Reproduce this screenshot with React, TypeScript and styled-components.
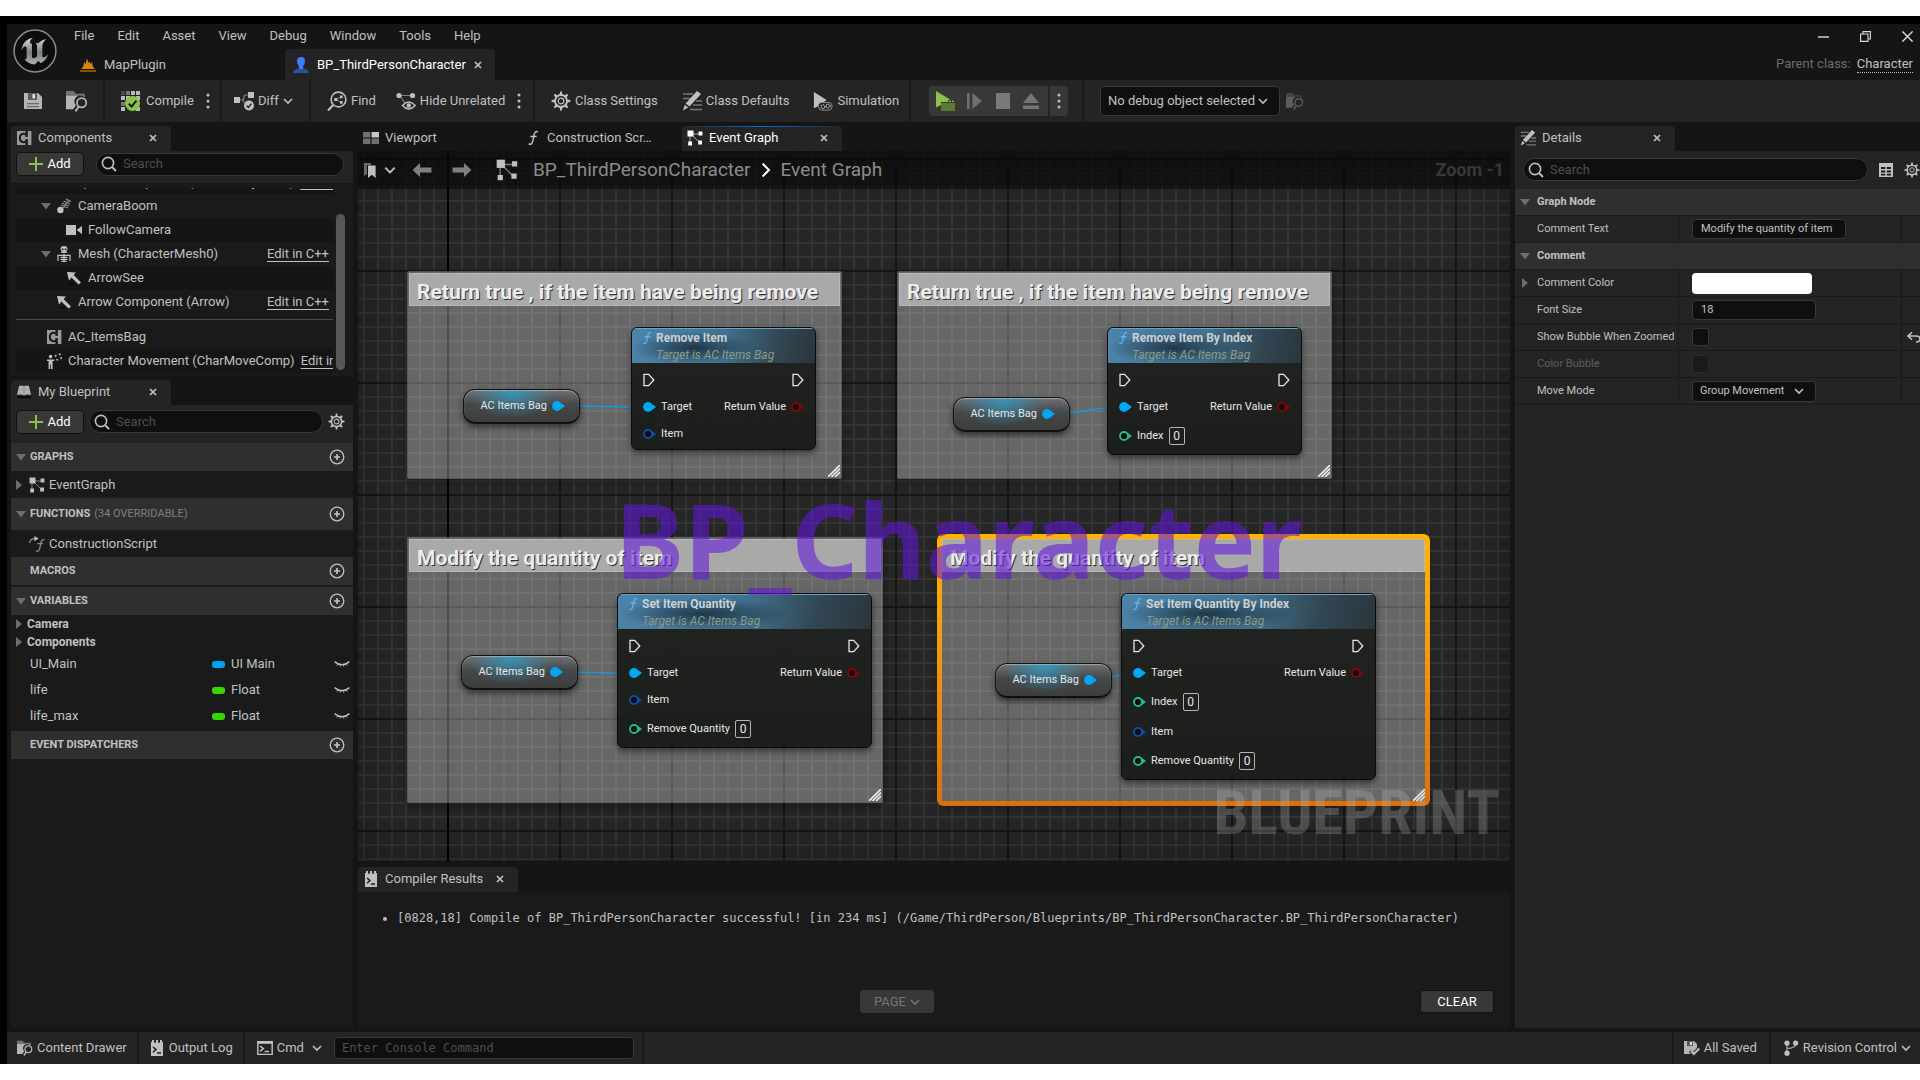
import React from 'react';
import styled, { createGlobalStyle, css } from 'styled-components';

const c = {
  base: '#151515',
  panel: '#242424',
  recessed: '#1a1a1a',
  header: '#2f2f2f',
  input: '#0f0f0f',
  line: '#383838',
  text: '#c0c0c0',
  dim: '#808080',
  faint: '#4d4d4d',
  blue: '#00a8f4',
};

const GlobalStyle = createGlobalStyle`
  *, *::before, *::after { box-sizing: border-box; }
  body { margin: 0; background: #fff; font-family: Roboto, "Liberation Sans", sans-serif; }
  button, input, select { font: inherit; color: inherit; margin: 0; }
  svg { display: block; flex: none; }
`;

/* ---------- icons ---------- */

type IconProps = { size?: number; color?: string };

const Svg = ({ size = 16, vb = 16, children }: { size?: number; vb?: number; children: React.ReactNode }) => (
  <svg width={size} height={size} viewBox={`0 0 ${vb} ${vb}`} fill="none" aria-hidden="true">
    {children}
  </svg>
);

const Chevron = ({ size = 10, color = c.text }: IconProps) => (
  <Svg size={size} vb={10}>
    <path d="M1 3 L5 7 L9 3" stroke={color} strokeWidth="1.6" />
  </Svg>
);
const Cross = ({ size = 8, color = c.text }: IconProps) => (
  <Svg size={size} vb={8}>
    <path d="M1 1 L7 7 M7 1 L1 7" stroke={color} strokeWidth="1.7" />
  </Svg>
);
const Caret = ({ open, size = 10 }: { open?: boolean; size?: number }) => (
  <Svg size={size} vb={10}>
    <path d={open ? 'M0 2 H10 L5 8.5 Z' : 'M2 0 V10 L8 5 Z'} fill="#6e6e6e" />
  </Svg>
);
const Magnifier = () => (
  <Svg size={16}>
    <circle cx="7" cy="7" r="5.6" stroke={c.text} strokeWidth="1.6" />
    <path d="M11 11 L15 15" stroke={c.text} strokeWidth="1.8" />
  </Svg>
);
const Plus = () => (
  <Svg size={14} vb={14}>
    <path d="M7 0 V14 M0 7 H14" stroke="#8bc24a" strokeWidth="2" />
  </Svg>
);
const AddCircle = () => (
  <Svg size={16}>
    <circle cx="8" cy="8" r="6.8" stroke={c.text} strokeWidth="1.3" />
    <path d="M8 5 V11 M5 8 H11" stroke={c.text} strokeWidth="1.7" />
  </Svg>
);
const Dots = () => (
  <svg width="4" height="16" viewBox="0 0 4 16" fill={c.text} aria-hidden="true">
    <circle cx="2" cy="2" r="1.5" />
    <circle cx="2" cy="8" r="1.5" />
    <circle cx="2" cy="14" r="1.5" />
  </svg>
);
const Gear = ({ size = 16 }: IconProps) => (
  <Svg size={size} vb={20}>
    <circle cx="10" cy="10" r="6" stroke={c.text} strokeWidth="1.8" />
    <circle cx="10" cy="10" r="2.8" stroke={c.text} strokeWidth="1.2" />
    {[0, 45, 90, 135, 180, 225, 270, 315].map((a) => (
      <path key={a} d="M8.6 4 L9.1 .6 H10.9 L11.4 4 Z" fill={c.text} transform={`rotate(${a} 10 10)`} />
    ))}
  </Svg>
);
const Floppy = ({ size = 18 }: IconProps) => (
  <Svg size={size} vb={18}>
    <path d="M0 1 H14 L18 5 V17 H0 Z" fill="#b4b4b4" />
    <path d="M4 1 H13 V8 H4 Z" fill="#5a5a5a" />
    <path d="M8.5 2 H11 V6.5 H8.5 Z" fill="#e0e0e0" />
    <path d="M3 11 H15 V12.2 H3 Z M3 14 H15 V15.2 H3 Z" fill="#6a6a6a" />
  </Svg>
);
const FloppyCheck = () => (
  <Svg size={16}>
    <path d="M0 1 H10 L13 4 V8 L9 12 L7 10 L5 12 L7 14 H0 Z" fill="#b4b4b4" />
    <path d="M3 1 H9 V6 H3 Z" fill="#5a5a5a" />
    <path d="M6 2 H8 V5 H6 Z" fill="#e0e0e0" />
    <path d="M7 11 L9.8 14 L15.3 8.5" stroke={c.text} strokeWidth="2" />
  </Svg>
);
const FolderSearch = ({ size = 20, color = '#b4b4b4' }: IconProps) => (
  <Svg size={size} vb={20}>
    <path d="M0 1 H7 L9 3.5 H17 V5 H0 Z" fill={color} opacity=".55" />
    <path d="M0 5 H17 V6.6 A5.4 5.4 0 0 0 9 14 L6.5 17.5 H0 Z" fill={color} />
    <circle cx="14.2" cy="11.6" r="4.2" stroke={color} strokeWidth="1.6" />
    <path d="M11.6 15 L8.6 19.4" stroke={color} strokeWidth="1.8" />
  </Svg>
);
const CompileIcon = () => (
  <Svg size={22} vb={22}>
    <path
      d="M1 6 H5 V10 H1 Z M11 1 H15 V5 H11 Z M6 6 H10 V10 H6 Z M1 17 H5 V21 H1 Z M16 17 H20 V21 H16 Z M16 1 H20 V5 H16 Z M16 6 H20 V10 H16 Z"
      fill="#b8b8b8"
    />
    <path d="M6 1 H10 V5 H6 Z M1 12 H5 V16 H1 Z M11 6 H15 V10 H11 Z" fill="#777" />
    <path d="M1 1 H5 V5 H1 Z" fill="#4a4a4a" />
    <circle cx="12.5" cy="13.5" r="7.5" fill="#8bc24a" />
    <path d="M8.8 13.8 L11.6 16.6 L16.4 10.6" stroke="#151515" strokeWidth="2" />
  </Svg>
);
const DiffIcon = () => (
  <Svg size={20} vb={20}>
    <path d="M0 6 H6 V12 H0 Z M14 1 H20 V7 H14 Z" fill={c.text} />
    <path d="M6 9 H8 Q10 9 10 6 Q10 4 12 4 H14 M8 9 Q10 9 10 12" stroke={c.dim} strokeWidth="1.2" />
    <circle cx="15" cy="14.5" r="5" fill={c.text} />
    <path d="M12.6 14.8 L14.4 16.4 L17.4 12.6" stroke={c.panel} strokeWidth="1.5" />
  </Svg>
);
const FindIcon = () => (
  <Svg size={20} vb={20}>
    <circle cx="11.5" cy="8.5" r="7.4" stroke={c.text} strokeWidth="1.6" />
    <path d="M6.2 14 L1 19.4" stroke={c.text} strokeWidth="2.2" />
    <path d="M9 8.5 L14 6 M9 8.5 L14 11.4" stroke={c.dim} />
    <path d="M7.2 7 H10.2 V10 H7.2 Z M13 4.4 H15.6 V7.2 H13 Z M13 10 H15.6 V12.8 H13 Z" fill={c.text} />
  </Svg>
);
const HideIcon = () => (
  <Svg size={20} vb={20}>
    <path d="M3 4.5 H16 M4 5 L9 12" stroke={c.dim} strokeWidth="1.2" />
    <circle cx="3" cy="4.5" r="2.6" fill={c.text} />
    <circle cx="16.5" cy="4.5" r="2.6" fill={c.text} />
    <path d="M6.4 14.5 Q12.8 7.6 19.2 14.5 Q12.8 21.4 6.4 14.5 Z" stroke={c.text} strokeWidth="1.4" />
    <circle cx="12.8" cy="14.5" r="2.2" fill={c.text} />
  </Svg>
);
const PenLines = ({ size = 20 }: IconProps) => (
  <Svg size={size} vb={20}>
    <path d="M1 3 H11 M1 7.5 H8 M14 10 H20 M11 14 H20 M8 18.5 H20" stroke="#777" strokeWidth="1.6" />
    <path d="M15 0 L19 3 L7.5 15.6 L3.6 12.4 Z M2.8 13.8 L6.2 16.6 L1 19.4 Z" fill={c.text} />
  </Svg>
);
const SimulateIcon = () => (
  <Svg size={20} vb={22}>
    <path d="M1 1 L15 10 L12 12 Q7 12 5 17 L1 19 Z" fill={c.text} />
    <path d="M6 17 Q6 12.4 10 12.6 H19 Q21 14 21 17 Q21 20.4 18 21 H9 Q6 20.4 6 17 Z" stroke="#8a8a8a" strokeWidth="1.1" />
    <circle cx="11" cy="17.2" r="2.1" stroke={c.text} strokeWidth="1.3" strokeDasharray="1.4 .8" />
    <circle cx="16.6" cy="16.4" r="2.1" stroke={c.text} strokeWidth="1.3" strokeDasharray="1.4 .8" />
  </Svg>
);
const PlayIcon = () => (
  <Svg size={20} vb={20}>
    <path d="M1 0 L15 8.4 L10 11 H6 V14 L1 16.4 Z" fill="#8bc24a" />
    <path d="M6 12 H20 V20 H6 Z" fill="#587a33" />
    <path d="M8 10.4 H20" stroke="#8bc24a" strokeWidth="1.4" strokeDasharray="2 1" />
  </Svg>
);
const StepIcon = () => (
  <Svg size={18} vb={18}>
    <path d="M1 1 H3.6 V17 H1 Z" fill="#6f6f6f" />
    <path d="M6.4 1 L16 9 L6.4 17 Z" fill="#6f6f6f" />
  </Svg>
);
const StopIcon = () => (
  <Svg size={16}>
    <path d="M1 0 H15 V16 H1 Z" fill="#7a7a7a" />
  </Svg>
);
const EjectIcon = () => (
  <Svg size={18} vb={18}>
    <path d="M9 1 L17 11 H1 Z M1 13.4 H17 V17 H1 Z" fill="#757575" />
  </Svg>
);
const BracketC = () => (
  <Svg size={16}>
    <path d="M1 1 H10 V3 H11.6 V1 H15.4 V15 H11.6 V13 H10 V15 H1 Z" fill="#9a9a9a" />
    <path d="M10 4.6 Q8.6 3.6 7 3.8 Q3.8 4.4 3.8 8 Q3.8 11.6 7 12.2 Q8.6 12.4 10 11.4" stroke="#1c1c1c" strokeWidth="2" />
    <path d="M9.4 1 H11.8 V7 H9.4 Z M9.4 9 H11.8 V15 H9.4 Z" fill="#1c1c1c" />
  </Svg>
);
const BookIcon = () => (
  <Svg size={16}>
    <path d="M3 2 Q5.5 .8 8 2 Q10.5 .8 13 2 L15 11 Q11 10 8 11.4 Q5 10 1 11 Z" fill="#b0b0b0" />
    <path d="M1 12 Q5 11.4 8 12.8 Q11 11.4 15 12 L14 15 Q11 13.4 8 14.6 Q4 13.4 2 14 Z" fill="#080808" />
    <path d="M8 2 V11" stroke="#8a8a8a" />
    <path d="M2.4 6 Q5 5 8 6.2 Q11 5 13.6 6" stroke="#999" strokeWidth=".7" />
  </Svg>
);
const ViewportIcon = () => (
  <Svg size={16}>
    <path d="M0 2 H7.4 V7.4 H0 Z M0 8.6 H7.4 V14 H0 Z M8.6 8.6 H16 V14 H8.6 Z" fill="#6f6f6f" />
    <path d="M8.6 2 H16 V7.4 H8.6 Z" fill="#c8c8c8" />
  </Svg>
);
const FuncIcon = ({ size = 16, color = c.text }: IconProps) => (
  <Svg size={size}>
    <path
      d="M12.6 2.4 Q11.6 1 10.4 2 Q9.2 3 8.6 7 Q7.8 12 6.8 13.4 Q5.4 15 3.8 13.6 M5.4 6.6 H11.6"
      stroke={color}
      strokeWidth="1.5"
    />
  </Svg>
);
const GraphIcon = ({ size = 16, color = c.text }: IconProps) => (
  <Svg size={size}>
    <path d="M4 4 L12 12 M4 4 H13 M3 4 V12" stroke={color} strokeWidth="1" opacity=".6" />
    <path d="M.5 .5 H6.5 V6.5 H.5 Z" fill={color} />
    <path d="M11.6 1.6 H15.4 V5.4 H11.6 Z M1.2 11.6 H5 V15.4 H1.2 Z M11.2 10.6 H15 V14.4 H11.2 Z" fill={color} />
  </Svg>
);
const OverrideFunc = () => (
  <Svg size={16}>
    <path d="M.6 7 Q1 2.6 6 2.6" stroke="#8a8a8a" strokeWidth="1.4" />
    <path d="M5.4 0 L9.6 2.6 L5.4 5.2 Z" fill={c.text} />
    <path d="M15.4 4 Q14 3 12.8 4.4 Q12 6 11.4 9.4 Q10.8 13.6 9.6 14.8 Q8.4 15.8 7 14.8 M8.4 7.6 H14" stroke="#8a8a8a" strokeWidth="1.3" />
  </Svg>
);
const LogIcon = () => (
  <Svg size={16}>
    <path d="M2 2 H14 V16 H2 Z" fill={c.text} />
    <path d="M4 0 V4 M8 0 V4 M12 0 V4" stroke={c.text} strokeWidth="2" />
    <path d="M6 0 V3 M10 0 V3" stroke={c.panel} strokeWidth="1.4" />
    <path d="M4 7 L7 9.6 L4 12.2 M8 13 H12" stroke="#222" strokeWidth="1.5" />
  </Svg>
);
const CmdIcon = () => (
  <Svg size={16}>
    <path d="M.8 1.8 H15.2 V14.4 H.8 Z" stroke={c.text} strokeWidth="1.4" />
    <path d="M.8 2.6 H15.2" stroke={c.text} strokeWidth="2.4" />
    <path d="M3 6 L6.4 8.6 L3 11.4 M7.6 11.6 H12" stroke={c.text} strokeWidth="1.5" />
  </Svg>
);
const BranchIcon = () => (
  <Svg size={16}>
    <path d="M4 3 V13 M13 3 Q13 8 4 8.6" stroke="#9a9a9a" strokeWidth="1.4" />
    <circle cx="4" cy="3" r="2.6" fill={c.text} />
    <circle cx="12.6" cy="3" r="2.6" fill={c.text} />
    <circle cx="4" cy="13.2" r="2.6" fill={c.text} />
  </Svg>
);
const MapIcon = () => (
  <Svg size={16}>
    <path d="M0 13 H16 V15 H0 Z" fill="#8a5208" />
    <path d="M1 12 Q4 10 4 5 L5.6 7 L7 1.6 L8.6 6 L9.6 4.4 L10.6 7 L12.4 5 Q12 10 15 12 Z" fill="#d6860f" />
  </Svg>
);
const PersonIcon = () => (
  <Svg size={16}>
    <path d="M0 16 Q.4 12 6 11.4 H10 Q15.6 12 16 16 Z" fill="#2a50a8" />
    <path d="M4 3.4 Q4.4 0 8 0 Q11.6 0 12 3.4 Q12 7 10.2 8.8 V12 H5.8 V8.8 Q4 7 4 3.4 Z" fill="#3f7bff" />
  </Svg>
);
const SpringArm = () => (
  <Svg size={16}>
    <circle cx="4.4" cy="12" r="3.2" fill={c.text} />
    <path d="M5 7 L12 10 M6 5 L13 8 M7.6 3 L14 6 M10 1 L15 3.6 M7 10 L13 2" stroke="#8f8f8f" strokeWidth="1.2" />
  </Svg>
);
const CameraIcon = () => (
  <Svg size={16}>
    <path d="M0 3 H10 V13 H0 Z M10.6 8 L16 4 V12 Z" fill={c.text} />
  </Svg>
);
const SkeletonIcon = () => (
  <Svg size={16}>
    <path d="M4.4 3 Q4.6 0 8 0 Q11.4 0 11.6 3 L10.6 5 V7 H5.4 V5 Z" fill={c.text} />
    <path d="M5.8 2.4 H7.4 V4.2 H5.8 Z M8.8 2.4 H10.4 V4.2 H8.8 Z" fill="#222" />
    <path d="M2 15 V9.4 H14 V15 M8 8 V16 M4.6 11.4 H11.4 M4.6 13.4 H11.4 M5.4 15.4 H10.6" stroke={c.text} strokeWidth="1.2" />
  </Svg>
);
const ArrowComp = () => (
  <Svg size={16}>
    <path d="M1 2 L10 2.6 L7.6 5 L15 12.6 L12.6 14.6 L5.4 7.6 L3 10.4 Z" fill={c.text} />
    <path d="M2 14 Q6 11 10 14.6 Z" fill="#080808" />
  </Svg>
);
const MoveComp = () => (
  <Svg size={16}>
    <circle cx="4.6" cy="3.6" r="1.8" fill={c.text} />
    <path d="M1 6.4 H8.4 V8 H6.6 V16 H5 V11.6 H4.2 V16 H2.6 V8 H1 Z" fill={c.text} />
    <circle cx="12.4" cy="4" r="3" stroke={c.text} strokeWidth="1.6" strokeDasharray="2 2.7" />
  </Svg>
);
const ClosedEye = () => (
  <Svg size={16}>
    <path d="M.6 5.6 Q8 12 15.4 5.6" stroke={c.text} strokeWidth="1.4" />
    <path d="M3.4 8.4 L2.8 9.6 M6.4 9.4 L6.2 10.6 M9.6 9.4 L9.8 10.6 M12.6 8.4 L13.2 9.6" stroke={c.text} strokeWidth="1" />
  </Svg>
);
const TableIcon = () => (
  <Svg size={16}>
    <path d="M1 1 H15 V15 H1 Z" fill={c.text} />
    <path d="M3 5 H7.2 V7 H3 Z M8.8 5 H13 V7 H8.8 Z M3 8.4 H7.2 V10.4 H3 Z M8.8 8.4 H13 V10.4 H8.8 Z M3 11.8 H7.2 V13.6 H3 Z M8.8 11.8 H13 V13.6 H8.8 Z" fill="#1d1d1d" />
  </Svg>
);
const UndoIcon = () => (
  <Svg size={16}>
    <path d="M6 3.4 L2 7 L6 10.6 M2.4 7 H10 Q14 7 14 10 Q14 13 10 13" stroke={c.text} strokeWidth="1.6" />
  </Svg>
);
const BookmarkIcon = () => (
  <Svg size={16}>
    <path d="M0 1 H7 V3 H3 V12 L0 14 Z" fill="#6a6a6a" />
    <path d="M4 3.6 H11.6 V16 L7.8 12.8 L4 16 Z" fill={c.text} />
  </Svg>
);
const ThickArrow = ({ flip }: { flip?: boolean }) => (
  <Svg size={20} vb={20}>
    <path d="M.6 10 L8 3 V7.4 H19.4 V12.6 H8 V17 Z" fill={c.dim} transform={flip ? 'rotate(180 10 10)' : undefined} />
  </Svg>
);
const ResizeGrip = () => (
  <Svg size={12} vb={12}>
    <path d="M0 12 L12 0 M3.4 12 L12 3.6 M7 12 L12 7.2" stroke="#eee" strokeWidth="1.6" />
  </Svg>
);
const UnrealLogo = () => (
  <Svg size={44} vb={24}>
    <defs>
      <linearGradient id="logoMetal" x1="0" y1="0" x2="0" y2="1">
        <stop offset="0" stopColor="#dcdcdc" />
        <stop offset=".55" stopColor="#7d8285" />
        <stop offset="1" stopColor="#aab0b2" />
      </linearGradient>
    </defs>
    <circle cx="12" cy="12" r="11.4" fill="#0d0d0d" stroke="#8b8f90" strokeWidth=".8" />
    <path
      d="M19.13 13.729c-.206.997-1.126 3.557-4.06 4.942l-1.179-1.325-1.988 2a7.338 7.338 0 0 1-5.804-2.978 2.859 2.859 0 0 0 .65.123c.326.006.678-.114.678-.66v-5.394a.89.89 0 0 0-1.116-.89c-.92.212-1.656 2.509-1.656 2.509a7.304 7.304 0 0 1 2.528-5.597 7.408 7.408 0 0 1 3.73-1.721c-1.006.573-1.57 1.507-1.57 2.29 0 1.262.76 1.109.984.923v7.28a1.157 1.157 0 0 0 .148.256 1.075 1.075 0 0 0 .88.445c.76 0 1.747-.868 1.747-.868V9.172c0-.6-.452-1.324-.905-1.572 0 0 .838-.149 1.484.346a5.537 5.537 0 0 1 .387-.425c1.508-1.48 2.929-1.902 4.112-2.112 0 0-2.151 1.69-2.151 3.96 0 1.687.043 5.801.043 5.801.799.771 1.986-.342 3.059-1.441Z"
      fill="url(#logoMetal)"
    />
  </Svg>
);

/* ---------- shell ---------- */

const Page = styled.div`
  height: 100vh;
  min-height: 900px;
  padding: 16px 0;
`;
const Editor = styled.div`
  height: 100%;
  display: flex;
  flex-direction: column;
  border-top: 8px solid #000;
  border-left: 7px solid #000;
  background: ${c.base};
  color: ${c.text};
  font-size: 13px;
  line-height: 16px;
  overflow: hidden;
`;
const PlainButton = styled.button`
  display: inline-flex;
  align-items: center;
  gap: 4px;
  padding: 0;
  border: 0;
  background: none;
  white-space: nowrap;
`;

const TitleBar = styled.header`
  display: flex;
  height: 56px;
  padding: 0 7px 0 6px;
  flex: none;
`;
const LogoBox = styled.div`
  display: flex;
  align-items: center;
  width: 61px;
  padding-bottom: 2px;
`;
const TitleMain = styled.div`
  flex: 1;
  display: flex;
  flex-direction: column;
  justify-content: space-between;
`;
const Menu = styled.nav`
  display: flex;
  align-items: center;
  gap: 23px;
  height: 24px;
`;
const AssetTabs = styled.div`
  display: flex;
`;
const AssetTab = styled.div<{ $active?: boolean }>`
  display: flex;
  align-items: center;
  gap: 8px;
  width: ${(p) => (p.$active ? 210 : 211)}px;
  height: 31px;
  padding: 0 15px 0 ${(p) => (p.$active ? 8 : 6)}px;
  border-radius: 4px 4px 0 0;
  background: ${(p) => (p.$active ? c.panel : 'transparent')};
  color: ${(p) => (p.$active ? '#fff' : c.text)};
`;
const TitleSide = styled.div`
  display: flex;
  flex-direction: column;
  align-items: flex-end;
  justify-content: space-between;
`;
const WindowButtons = styled.div`
  display: flex;
  align-items: center;
  gap: 31px;
  height: 24px;
`;
const ParentClass = styled.div`
  display: flex;
  gap: 6px;
  height: 24px;
  color: #6c6c6c;
  a {
    height: 17px;
    color: ${c.text};
    text-decoration: none;
    border-bottom: 1px dotted ${c.text};
  }
`;

/* ---------- toolbar ---------- */

const Toolbar = styled.div`
  display: flex;
  align-items: stretch;
  flex: none;
  height: 42px;
  background: ${c.panel};
`;
const ToolGroup = styled.div<{ $gap?: number; $pad?: string; $w?: number }>`
  display: flex;
  align-items: center;
  gap: ${(p) => p.$gap ?? 16}px;
  padding: 0 ${(p) => p.$pad ?? '12px'};
  ${(p) => p.$w && css`width: ${p.$w}px;`}
  border-right: 2px solid #191919;
  &:last-child {
    border-right: 0;
  }
`;
const SplitTool = styled.div`
  display: flex;
  align-items: center;
  gap: 12px;
`;
const PlayGroup = styled.div`
  display: flex;
  align-items: center;
  gap: 11px;
  height: 30px;
  padding: 0 0 0 6px;
  border-radius: 4px;
  background: ${c.line};
`;
const PlayMore = styled(PlainButton)`
  justify-content: center;
  width: 20px;
  height: 30px;
  margin-left: -3px;
  border-left: 2px solid #242424;
`;
const SelectBox = styled.span<{ $w: number; $h: number; $size?: number }>`
  display: inline-flex;
  align-items: center;
  position: relative;
  width: ${(p) => p.$w}px;
  height: ${(p) => p.$h}px;
  font-size: ${(p) => p.$size ?? 13}px;
  select {
    appearance: none;
    width: 100%;
    height: 100%;
    padding: 0 20px 0 7px;
    border: 1px solid ${c.line};
    border-radius: 4px;
    background: ${c.input};
    color: ${c.text};
  }
  svg {
    position: absolute;
    right: 12px;
    pointer-events: none;
  }
`;

/* ---------- docking ---------- */

const Workspace = styled.main`
  flex: 1;
  min-height: 0;
  display: grid;
  grid-template-columns: 342px minmax(0, 1fr) 405px;
  gap: 5px;
  padding: 0 0 4px 4px;
`;
const Column = styled.section`
  display: flex;
  flex-direction: column;
  min-width: 0;
  min-height: 0;
`;
const TabStrip = styled.div<{ $top?: number }>`
  display: flex;
  align-items: flex-end;
  gap: 2px;
  flex: none;
  height: ${(p) => 25 + (p.$top ?? 4)}px;
`;
const Tab = styled.div<{ $open?: boolean; $focus?: boolean }>`
  position: relative;
  display: flex;
  align-items: center;
  gap: 6px;
  width: 160px;
  height: 25px;
  padding: 0 14px 2px 5px;
  border-radius: 4px 4px 0 0;
  overflow: hidden;
  white-space: nowrap;
  background: ${(p) => (p.$open ? c.panel : 'transparent')};
  color: ${(p) => (p.$focus ? '#fff' : c.text)};
  ${(p) =>
    p.$focus &&
    css`
      &::before {
        content: '';
        position: absolute;
        inset: 0 0 auto 0;
        height: 1px;
        background: linear-gradient(90deg, transparent, #0070e0, transparent);
      }
    `}
`;
const TabTitle = styled.span`
  flex: 1;
`;
const PanelBar = styled.div<{ $h: number; $gap?: number; $pad?: string }>`
  display: flex;
  align-items: center;
  gap: ${(p) => p.$gap ?? 8}px;
  flex: none;
  height: ${(p) => p.$h}px;
  padding: ${(p) => p.$pad ?? '0 8px 0 5px'};
  background: ${c.panel};
`;
const AddButton = styled(PlainButton)`
  justify-content: center;
  width: 68px;
  height: 24px;
  border: 1px solid #111;
  border-radius: 4px;
  background: ${c.line};
  color: #fff;
`;
const SearchBox = styled.label`
  display: flex;
  align-items: center;
  gap: 6px;
  flex: 1;
  min-width: 0;
  height: 23px;
  padding: 0 4px;
  border: 1px solid ${c.line};
  border-radius: 12px;
  background: ${c.input};
  input {
    flex: 1;
    min-width: 0;
    padding: 0;
    border: 0;
    outline: 0;
    background: none;
    &::placeholder {
      color: ${c.faint};
      opacity: 1;
    }
  }
`;

const Search = ({ label }: { label: string }) => (
  <SearchBox>
    <Magnifier />
    <input type="text" placeholder="Search" aria-label={label} />
  </SearchBox>
);

const DockTab = ({ icon, title, open, focus, close }: { icon: React.ReactNode; title: string; open?: boolean; focus?: boolean; close?: boolean }) => (
  <Tab $open={open} $focus={focus}>
    {icon}
    <TabTitle>{title}</TabTitle>
    {close && (
      <PlainButton aria-label={`Close ${title}`}>
        <Cross />
      </PlainButton>
    )}
  </Tab>
);

/* ---------- component tree ---------- */

const TreeFrame = styled.div`
  display: flex;
  gap: 3px;
  flex: none;
  height: 193px;
  padding: 4px 8px 3px 5px;
  background: ${c.recessed};
  border-top: 1px solid #151515;
`;
const TreeRows = styled.div`
  flex: 1;
  min-width: 0;
  display: flex;
  flex-direction: column;
  justify-content: flex-end;
  overflow: hidden;
`;
const TreeRow = styled.div<{ $depth: number; $alt?: boolean }>`
  display: flex;
  align-items: center;
  flex: none;
  gap: 6px;
  height: 24px;
  padding: 0 4px 0 ${(p) => 15 + p.$depth * 10}px;
  background: ${(p) => (p.$alt ? '#151515' : 'transparent')};
  white-space: nowrap;
  a {
    flex: none;
    margin-left: auto;
    color: ${c.text};
    text-underline-offset: 3px;
  }
`;
const CaretSlot = styled.span`
  display: inline-flex;
  width: 9px;
  flex: none;
`;
const TreeDivider = styled.hr`
  flex: none;
  width: 100%;
  height: 1px;
  margin: 5px 0;
  border: 0;
  background: #4a4a4a;
`;
const ScrollThumb = styled.div`
  align-self: flex-end;
  width: 9px;
  height: 156px;
  margin-bottom: 3px;
  border-radius: 5px;
  background: #575757;
`;

type TreeItem = { depth: number; icon: React.ReactNode; name: string; open?: boolean; cpp?: boolean; alt?: boolean };
const sceneTree: TreeItem[] = [
  { depth: 0, icon: <CameraIcon />, name: 'Capsule Component (CollisionCylinder)', open: true, cpp: true, alt: true },
  { depth: 1, icon: <SpringArm />, name: 'CameraBoom', open: true },
  { depth: 2, icon: <CameraIcon />, name: 'FollowCamera', alt: true },
  { depth: 1, icon: <SkeletonIcon />, name: 'Mesh (CharacterMesh0)', open: true, cpp: true },
  { depth: 2, icon: <ArrowComp />, name: 'ArrowSee', alt: true },
  { depth: 1, icon: <ArrowComp />, name: 'Arrow Component (Arrow)', cpp: true },
];
const actorTree: TreeItem[] = [
  { depth: 0, icon: <BracketC />, name: 'AC_ItemsBag' },
  { depth: 0, icon: <MoveComp />, name: 'Character Movement (CharMoveComp)', cpp: true, alt: true },
];

const TreeLine = ({ item }: { item: TreeItem }) => (
  <TreeRow $depth={item.depth} $alt={item.alt}>
    <CaretSlot>{item.open && <Caret open />}</CaretSlot>
    {item.icon}
    <span>{item.name}</span>
    {item.cpp && <a href="#cpp">Edit in C++</a>}
  </TreeRow>
);

/* ---------- my blueprint ---------- */

const BlueprintBody = styled.div`
  flex: 1;
  min-height: 0;
  background: ${c.recessed};
`;
const SectionHead = styled.div<{ $tall?: boolean; $gap?: boolean }>`
  display: flex;
  align-items: center;
  gap: 4px;
  height: ${(p) => (p.$tall ? 32 : 28)}px;
  margin-top: ${(p) => (p.$gap ? 2 : 0)}px;
  padding: 0 8px 0 5px;
  background: ${c.header};
  font-size: 11px;
  font-weight: 700;
  small {
    font-size: 11px;
    font-weight: 400;
    color: ${c.dim};
  }
  button {
    margin-left: auto;
  }
`;
const HeadCaret = styled.span`
  display: inline-flex;
  justify-content: flex-end;
  width: 10px;
`;
const MemberRow = styled.div`
  display: flex;
  align-items: center;
  gap: 4px;
  height: 27px;
  padding-left: 3px;
`;
const MemberCaret = styled.span`
  display: inline-flex;
  width: 11px;
`;
const CategoryRow = styled.div`
  display: flex;
  align-items: center;
  gap: 3px;
  height: 18px;
  padding-left: 3px;
  font-size: 12px;
  font-weight: 700;
`;
const VariableRow = styled.div`
  display: grid;
  grid-template-columns: 182px 1fr 16px;
  align-items: center;
  height: 26px;
  padding: 0 3px 0 19px;
`;
const TypeCell = styled.span<{ $color: string }>`
  display: flex;
  align-items: center;
  gap: 6px;
  &::before {
    content: '';
    width: 13px;
    height: 7px;
    border-radius: 3px;
    background: ${(p) => p.$color};
  }
`;
const variables = [
  { name: 'UI_Main', type: 'UI Main', color: '#00a2f2' },
  { name: 'life', type: 'Float', color: '#38d500' },
  { name: 'life_max', type: 'Float', color: '#38d500' },
];

const Section = ({ title, note, caret, tall, gap }: { title: string; note?: string; caret?: boolean; tall?: boolean; gap?: boolean }) => (
  <SectionHead $tall={tall} $gap={gap}>
    <HeadCaret>{caret && <Caret open />}</HeadCaret>
    <span>{title}</span>
    {note && <small>{note}</small>}
    <PlainButton aria-label={`Add to ${title}`}>
      <AddCircle />
    </PlainButton>
  </SectionHead>
);

/* ---------- graph ---------- */

const Graph = styled.div`
  position: relative;
  flex: 1;
  min-height: 0;
  overflow: hidden;
  background-color: #262626;
  background-image:
    linear-gradient(#000, #000),
    linear-gradient(90deg, #151515 2px, transparent 2px),
    linear-gradient(#151515 2px, transparent 2px),
    linear-gradient(90deg, #343434 2px, transparent 2px),
    linear-gradient(#343434 2px, transparent 2px);
  background-size: 2px 100%, 112px 112px, 112px 112px, 14px 14px, 14px 14px;
  background-position: 89px 0, 89px 7px, 89px 7px, 89px 7px, 89px 7px;
  background-repeat: no-repeat, repeat, repeat, repeat, repeat;
`;
const Vignette = styled.div`
  position: absolute;
  inset: 0;
  box-shadow: inset 0 0 50px rgba(0, 0, 0, 0.35);
  pointer-events: none;
`;
const GraphBar = styled.div`
  position: relative;
  z-index: 2;
  display: flex;
  align-items: center;
  height: 38px;
  padding: 0 6px;
  background: rgba(10, 10, 10, 0.72);
  font-size: 19px;
  line-height: 24px;
  color: #8c8c8c;
`;
const BarCell = styled.span<{ $w: number }>`
  display: flex;
  align-items: center;
  gap: 4px;
  width: ${(p) => p.$w}px;
  height: 34px;
`;
const Crumbs = styled.nav`
  display: flex;
  align-items: center;
  gap: 8px;
`;
const ZoomLabel = styled.span`
  margin-left: auto;
  font-size: 18px;
  font-weight: 700;
  color: #383838;
`;

type Pos = { $x: number; $y: number };
const placed = css<Pos>`
  position: absolute;
  left: ${(p) => p.$x}px;
  top: ${(p) => p.$y}px;
`;

const CommentBox = styled.div<Pos & { $w: number; $h: number; $selected?: boolean }>`
  ${placed}
  width: ${(p) => p.$w}px;
  height: ${(p) => p.$h}px;
  padding: 2px;
  border-radius: 2px;
  background: rgba(255, 255, 255, 0.3);
  box-shadow: 0 3px 8px rgba(0, 0, 0, 0.4), inset 0 0 0 1px rgba(60, 60, 60, 0.35);
  ${(p) =>
    p.$selected &&
    css`
      &::before {
        content: '';
        position: absolute;
        inset: -3px;
        padding: 5px;
        border-radius: 6px;
        background: linear-gradient(#ffb400, #f59a10 40%, #d8700c);
        mask: linear-gradient(#000 0 0) content-box exclude, linear-gradient(#000 0 0);
      }
    `}
`;
const CommentTitle = styled.div`
  height: 33px;
  padding: 5px 7px 0;
  border: 1px solid #b8b8b8;
  background: #a9a9a9;
  color: #ececec;
  font-size: 21px;
  line-height: 26px;
  font-weight: 700;
  white-space: nowrap;
  text-shadow: 1px 1px 0 #333;
`;
const Grip = styled.span`
  position: absolute;
  right: 2px;
  bottom: 2px;
`;

const NodeFrame = styled.div<Pos & { $w: number }>`
  ${placed}
  width: ${(p) => p.$w}px;
  border: 1px solid #0b0b0b;
  border-radius: 6px;
  overflow: hidden;
  background: linear-gradient(rgba(30, 32, 29, 0.95), rgba(24, 26, 23, 0.95));
  box-shadow: 0 3px 6px rgba(0, 0, 0, 0.5);
  color: #e6e6e6;
  font-size: 11px;
  line-height: 14px;
`;
const NodeHead = styled.div`
  display: grid;
  grid-template-columns: 14px 1fr;
  column-gap: 2px;
  height: 35px;
  padding: 2px 0 0 8px;
  border-top: 1px solid #6ba3c6;
  background:
    radial-gradient(ellipse 34% 46% at 34% 56%, rgba(26, 44, 58, 0.85), transparent),
    linear-gradient(100deg, #4d84aa 0%, #41718f 50%, #324753 78%, #2a363d 100%);
`;
const NodeTitle = styled.span`
  font-size: 12px;
  line-height: 15px;
  font-weight: 700;
  color: #c9d0d3;
`;
const NodeSub = styled.span`
  grid-column: 2;
  font-size: 12px;
  line-height: 16px;
  font-style: italic;
  color: #8d9c84;
`;
const NodeBody = styled.div`
  display: flex;
  flex-direction: column;
  gap: 6px;
  padding: 6px 11px 5px;
`;
const PinRow = styled.div<{ $tall?: boolean }>`
  display: flex;
  align-items: center;
  justify-content: space-between;
  height: ${(p) => (p.$tall ? 26 : 21)}px;
`;
const PinSide = styled.span`
  display: inline-flex;
  align-items: center;
  gap: 5px;
`;
const PinInput = styled.input`
  width: 16px;
  height: 18px;
  padding: 0;
  border: 1px solid #b5b5b5;
  border-radius: 2px;
  background: transparent;
  text-align: center;
  font-size: 12px;
`;
const VarNode = styled.div<Pos>`
  ${placed}
  display: flex;
  align-items: center;
  justify-content: flex-end;
  gap: 5px;
  width: 117px;
  height: 35px;
  padding: 0 14px 0 0;
  border: 1px solid #111;
  border-bottom-width: 2px;
  border-radius: 12px;
  background:
    radial-gradient(ellipse 36% 80% at 42% 10%, rgba(50, 150, 190, 0.85), transparent),
    linear-gradient(rgba(110, 115, 118, 0.9), rgba(66, 68, 69, 0.9) 45%, rgba(56, 57, 57, 0.92));
  box-shadow: 0 3px 6px rgba(0, 0, 0, 0.55), inset 0 1px 1px rgba(200, 200, 200, 0.6);
  color: #e6e6e6;
  font-size: 11px;
  line-height: 14px;
`;
const WireLayer = styled.svg`
  position: absolute;
  inset: 0;
  width: 100%;
  height: 100%;
  pointer-events: none;
`;
const Stamp = styled.div`
  position: absolute;
  left: 257px;
  top: 329px;
  font: 700 104px/118px 'Noto Sans', 'Open Sans', sans-serif;
  color: rgba(96, 22, 219, 0.57);
  white-space: nowrap;
  pointer-events: none;
`;
const Watermark = styled.div`
  position: absolute;
  right: 10px;
  bottom: 16px;
  font: 700 62px/64px 'Roboto Condensed', Roboto, sans-serif;
  color: rgba(190, 190, 190, 0.27);
  pointer-events: none;
`;

const ExecPin = () => (
  <svg width="12" height="14" viewBox="0 0 12 14" fill="none" aria-hidden="true">
    <path d="M1 1.4 H5.6 L10.8 7 L5.6 12.6 H1 Z" stroke="#e6e6e6" strokeWidth="1.3" />
  </svg>
);
const DataPin = ({ color, filled }: { color: string; filled?: boolean }) => (
  <svg width="13" height="10" viewBox="0 0 13 10" aria-hidden="true">
    <path d="M9 2 L13 5 L9 8 Z" fill={color} />
    <circle cx="5" cy="5" r="4" fill={filled ? color : '#0c0c0c'} stroke={color} strokeWidth="1.8" />
  </svg>
);

type Pin = { label: string; color: string; value?: string };
const item: Pin = { label: 'Item', color: '#0a4fb0' };
const index: Pin = { label: 'Index', color: '#1fbf8e', value: '0' };
const quantity: Pin = { label: 'Remove Quantity', color: '#1fbf8e', value: '0' };

const comments = [
  { x: 49, y: 120, w: 435, h: 208, title: 'Return true , if the item have being remove' },
  { x: 539, y: 120, w: 435, h: 208, title: 'Return true , if the item have being remove' },
  { x: 49, y: 386, w: 476, h: 266, title: 'Modify the quantity of item' },
  { x: 582, y: 386, w: 487, h: 266, title: 'Modify the quantity of item', selected: true },
];
const nodes: { x: number; y: number; w: number; title: string; pins: Pin[] }[] = [
  { x: 273, y: 176, w: 185, title: 'Remove Item', pins: [item] },
  { x: 749, y: 176, w: 195, title: 'Remove Item By Index', pins: [index] },
  { x: 259, y: 442, w: 255, title: 'Set Item Quantity', pins: [item, quantity] },
  { x: 763, y: 442, w: 255, title: 'Set Item Quantity By Index', pins: [index, item, quantity] },
];
const varNodes = [
  { x: 105, y: 238 },
  { x: 595, y: 246 },
  { x: 103, y: 504 },
  { x: 637, y: 512 },
];
const wires = [
  'M206 255 C230 255 260 256 286 256',
  'M696 263 C722 263 736 256 762 256',
  'M204 521 C228 521 246 522 270 522',
  'M738 529 C752 529 760 522 774 522',
];

const FunctionNode = ({ x, y, w, title, pins }: (typeof nodes)[number]) => (
  <NodeFrame $x={x} $y={y} $w={w}>
    <NodeHead>
      <FuncIcon size={14} color="#5fb4ea" />
      <NodeTitle>{title}</NodeTitle>
      <NodeSub>Target is AC Items Bag</NodeSub>
    </NodeHead>
    <NodeBody>
      <PinRow>
        <ExecPin />
        <ExecPin />
      </PinRow>
      <PinRow>
        <PinSide>
          <DataPin color={c.blue} filled />
          Target
        </PinSide>
        <PinSide>
          Return Value
          <DataPin color="#8c0306" />
        </PinSide>
      </PinRow>
      {pins.map((pin) => (
        <PinRow key={pin.label} $tall={pin.value !== undefined}>
          <PinSide>
            <DataPin color={pin.color} />
            {pin.label}
            {pin.value !== undefined && <PinInput type="text" defaultValue={pin.value} aria-label={`${title} ${pin.label}`} />}
          </PinSide>
        </PinRow>
      ))}
    </NodeBody>
  </NodeFrame>
);

/* ---------- compiler results ---------- */

const ResultsBody = styled.div`
  display: flex;
  flex-direction: column;
  justify-content: space-between;
  flex: none;
  height: 136px;
  padding: 17px 16px 15px;
  background: ${c.recessed};
`;
const ResultList = styled.ul`
  margin: 0;
  padding-left: 23px;
  font-family: 'DejaVu Sans Mono', monospace;
  font-size: 12px;
  line-height: 18px;
  white-space: nowrap;
`;
const ResultActions = styled.div`
  display: flex;
  align-items: center;
`;
const PageSlot = styled.div`
  flex: 1;
  display: flex;
  justify-content: center;
`;
const ActionButton = styled(PlainButton)`
  justify-content: center;
  width: 74px;
  height: 23px;
  border: 1px solid #111;
  border-radius: 3px;
  background: ${c.line};
  color: #fff;
  &:disabled {
    color: #757575;
    border-color: ${c.line};
  }
`;

/* ---------- details ---------- */

const DetailsBody = styled.div`
  flex: 1;
  min-height: 0;
  background: ${c.panel};
  font-size: 11px;
  line-height: 14px;
`;
const DetailsHead = styled.div`
  display: flex;
  align-items: center;
  gap: 7px;
  height: 27px;
  padding-left: 5px;
  border-bottom: 1px solid #1a1a1a;
  background: ${c.header};
  font-weight: 700;
`;
const PropRow = styled.div<{ $disabled?: boolean }>`
  display: grid;
  grid-template-columns: 164px minmax(0, 1fr) 18px;
  height: 27px;
  border-bottom: 1px solid #1a1a1a;
  color: ${(p) => (p.$disabled ? '#5e5e5e' : c.text)};
`;
const PropName = styled.label`
  display: flex;
  align-items: center;
  gap: 7px;
  padding-left: 5px;
  border-right: 1px solid #1a1a1a;
  white-space: nowrap;
`;
const PropSlot = styled.span`
  width: 10px;
`;
const PropValue = styled.div`
  display: flex;
  align-items: center;
  padding-left: 13px;
  border-right: 1px solid #1a1a1a;
`;
const Reset = styled(PlainButton)`
  padding-left: 4px;
  overflow: hidden;
`;
const TextField = styled.input<{ $w: number }>`
  width: ${(p) => p.$w}px;
  height: 20px;
  padding: 0 8px 1px;
  border: 1px solid ${c.line};
  border-radius: 4px;
  background: ${c.input};
`;
const Swatch = styled.button`
  width: 120px;
  height: 21px;
  padding: 0;
  border: 0;
  border-radius: 4px;
  background: #fff;
`;
const Check = styled.input`
  appearance: none;
  width: 17px;
  height: 18px;
  border: 1px solid ${c.line};
  border-radius: 3px;
  background: ${c.input};
  &:disabled {
    background: #1a1a1a;
    border-color: #2c2c2c;
  }
`;

const Prop = ({ id, label, caret, disabled, reset, children }: { id: string; label: string; caret?: boolean; disabled?: boolean; reset?: boolean; children: React.ReactNode }) => (
  <PropRow $disabled={disabled}>
    <PropName htmlFor={id}>
      <PropSlot>{caret && <Caret />}</PropSlot>
      {label}
    </PropName>
    <PropValue>{children}</PropValue>
    {reset ? (
      <Reset aria-label={`Reset ${label}`}>
        <UndoIcon />
      </Reset>
    ) : (
      <span />
    )}
  </PropRow>
);

/* ---------- status bar ---------- */

const StatusBar = styled.footer`
  display: flex;
  flex: none;
  height: 32px;
  background: ${c.panel};
`;
const StatusCell = styled.div<{ $pad?: string }>`
  display: flex;
  align-items: center;
  gap: 8px;
  padding: ${(p) => p.$pad ?? '0 10px'};
  border-right: 2px solid #191919;
`;
const StatusRight = styled.div`
  display: flex;
  margin-left: auto;
  border-left: 2px solid #191919;
  ${StatusCell}:last-child {
    border-right: 0;
  }
`;
const ConsoleInput = styled.input`
  width: 300px;
  height: 22px;
  margin-left: 4px;
  padding: 0 7px;
  border: 1px solid ${c.line};
  border-radius: 4px;
  background: ${c.input};
  font-family: 'DejaVu Sans Mono', monospace;
  font-size: 12px;
  &::placeholder {
    color: ${c.faint};
    opacity: 1;
  }
`;

export default function App() {
  return (
    <Page>
      <GlobalStyle />
      <Editor>
        <TitleBar>
          <LogoBox>
            <UnrealLogo />
          </LogoBox>
          <TitleMain>
            <Menu>
              {['File', 'Edit', 'Asset', 'View', 'Debug', 'Window', 'Tools', 'Help'].map((m) => (
                <PlainButton key={m}>{m}</PlainButton>
              ))}
            </Menu>
            <AssetTabs>
              <AssetTab>
                <MapIcon />
                <span>MapPlugin</span>
              </AssetTab>
              <AssetTab $active>
                <PersonIcon />
                <TabTitle>BP_ThirdPersonCharacter</TabTitle>
                <PlainButton aria-label="Close BP_ThirdPersonCharacter">
                  <Cross />
                </PlainButton>
              </AssetTab>
            </AssetTabs>
          </TitleMain>
          <TitleSide>
            <WindowButtons>
              <PlainButton aria-label="Minimize">
                <Svg size={11} vb={11}>
                  <path d="M0 6 H11" stroke="#ddd" strokeWidth="1.4" />
                </Svg>
              </PlainButton>
              <PlainButton aria-label="Restore">
                <Svg size={11} vb={11}>
                  <path d="M.6 3 H8 V10.4 H.6 Z M3 3 V.6 H10.4 V8 H8" stroke="#ddd" strokeWidth="1.1" />
                </Svg>
              </PlainButton>
              <PlainButton aria-label="Close">
                <Svg size={11} vb={11}>
                  <path d="M.4 .4 L10.6 10.6 M10.6 .4 L.4 10.6" stroke="#ddd" strokeWidth="1.4" />
                </Svg>
              </PlainButton>
            </WindowButtons>
            <ParentClass>
              Parent class: <a href="#character">Character</a>
            </ParentClass>
          </TitleSide>
        </TitleBar>

        <Toolbar>
          <ToolGroup $gap={24} $w={98} $pad="17px">
            <PlainButton aria-label="Save">
              <Floppy />
            </PlainButton>
            <PlainButton aria-label="Browse">
              <FolderSearch size={22} />
            </PlainButton>
          </ToolGroup>
          <ToolGroup $w={117} $pad="15px">
            <SplitTool>
              <PlainButton>
                <CompileIcon />
                Compile
              </PlainButton>
              <PlainButton aria-label="Compile options">
                <Dots />
              </PlainButton>
            </SplitTool>
          </ToolGroup>
          <ToolGroup $w={89}>
            <PlainButton>
              <DiffIcon />
              Diff
              <Chevron />
            </PlainButton>
          </ToolGroup>
          <ToolGroup $gap={20} $w={224} $pad="0 0 16px">
            <PlainButton>
              <FindIcon />
              Find
            </PlainButton>
            <SplitTool>
              <PlainButton>
                <HideIcon />
                Hide Unrelated
              </PlainButton>
              <PlainButton aria-label="Hide options">
                <Dots />
              </PlainButton>
            </SplitTool>
          </ToolGroup>
          <ToolGroup $gap={24} $w={376} $pad="0 0 16px">
            <PlainButton>
              <Gear size={20} />
              Class Settings
            </PlainButton>
            <PlainButton>
              <PenLines />
              Class Defaults
            </PlainButton>
            <PlainButton>
              <SimulateIcon />
              Simulation
            </PlainButton>
          </ToolGroup>
          <ToolGroup $w={173} $pad="0 0 18px">
            <PlayGroup>
              <PlainButton aria-label="Play">
                <PlayIcon />
              </PlainButton>
              <PlainButton aria-label="Step">
                <StepIcon />
              </PlainButton>
              <PlainButton aria-label="Stop">
                <StopIcon />
              </PlainButton>
              <PlainButton aria-label="Eject">
                <EjectIcon />
              </PlainButton>
              <PlayMore aria-label="Play options">
                <Dots />
              </PlayMore>
            </PlayGroup>
          </ToolGroup>
          <ToolGroup $gap={6} $pad="16px">
            <SelectBox $w={180} $h={30}>
              <select aria-label="Debug object">
                <option>No debug object selected</option>
              </select>
              <Chevron />
            </SelectBox>
            <PlainButton aria-label="Browse debug object" disabled>
              <FolderSearch size={18} color="#5c5c5c" />
            </PlainButton>
          </ToolGroup>
        </Toolbar>

        <Workspace>
          <Column>
            <TabStrip>
              <DockTab icon={<BracketC />} title="Components" open close />
            </TabStrip>
            <PanelBar $h={32} $gap={12} $pad="0 9px 6px 5px">
              <AddButton>
                <Plus />
                Add
              </AddButton>
              <Search label="Search components" />
            </PanelBar>
            <TreeFrame>
              <TreeRows>
                {sceneTree.map((t) => (
                  <TreeLine key={t.name} item={t} />
                ))}
                <TreeDivider />
                {actorTree.map((t) => (
                  <TreeLine key={t.name} item={t} />
                ))}
              </TreeRows>
              <ScrollThumb />
            </TreeFrame>
            <TabStrip>
              <DockTab icon={<BookIcon />} title="My Blueprint" open close />
            </TabStrip>
            <PanelBar $h={38} $gap={5} $pad="0 8px 5px 5px">
              <AddButton>
                <Plus />
                Add
              </AddButton>
              <Search label="Search blueprint" />
              <PlainButton aria-label="Blueprint view options">
                <Gear size={17} />
              </PlainButton>
            </PanelBar>
            <BlueprintBody>
              <Section title="GRAPHS" caret />
              <MemberRow>
                <MemberCaret>
                  <Caret />
                </MemberCaret>
                <GraphIcon />
                <span>EventGraph</span>
              </MemberRow>
              <Section title="FUNCTIONS" note="(34 OVERRIDABLE)" caret tall />
              <MemberRow>
                <MemberCaret />
                <OverrideFunc />
                <span>ConstructionScript</span>
              </MemberRow>
              <Section title="MACROS" />
              <Section title="VARIABLES" caret gap />
              {['Camera', 'Components'].map((n) => (
                <CategoryRow key={n}>
                  <Caret />
                  {n}
                </CategoryRow>
              ))}
              {variables.map((v) => (
                <VariableRow key={v.name}>
                  <span>{v.name}</span>
                  <TypeCell $color={v.color}>{v.type}</TypeCell>
                  <PlainButton aria-label={`Toggle visibility of ${v.name}`}>
                    <ClosedEye />
                  </PlainButton>
                </VariableRow>
              ))}
              <Section title="EVENT DISPATCHERS" gap />
            </BlueprintBody>
          </Column>

          <Column>
            <TabStrip>
              <DockTab icon={<ViewportIcon />} title="Viewport" />
              <DockTab icon={<FuncIcon />} title="Construction Scr…" />
              <DockTab icon={<GraphIcon color="#fff" />} title="Event Graph" open focus close />
            </TabStrip>
            <Graph>
              {comments.map((m) => (
                <CommentBox key={`${m.x}-${m.y}`} $x={m.x} $y={m.y} $w={m.w} $h={m.h} $selected={m.selected}>
                  <CommentTitle>{m.title}</CommentTitle>
                  <Grip>
                    <ResizeGrip />
                  </Grip>
                </CommentBox>
              ))}
              <WireLayer aria-hidden="true">
                {wires.map((d) => (
                  <path key={d} d={d} fill="none" stroke="#149ad8" strokeWidth="1.6" />
                ))}
              </WireLayer>
              {varNodes.map((v) => (
                <VarNode key={`${v.x}-${v.y}`} $x={v.x} $y={v.y}>
                  AC Items Bag
                  <DataPin color={c.blue} filled />
                </VarNode>
              ))}
              {nodes.map((n) => (
                <FunctionNode key={n.title} {...n} />
              ))}
              <Watermark>BLUEPRINT</Watermark>
              <Vignette />
              <Stamp>BP_Character</Stamp>
              <GraphBar>
                <BarCell $w={48}>
                  <PlainButton aria-label="Bookmarks">
                    <BookmarkIcon />
                    <Chevron size={12} />
                  </PlainButton>
                </BarCell>
                <BarCell $w={40}>
                  <PlainButton aria-label="Back">
                    <ThickArrow />
                  </PlainButton>
                </BarCell>
                <BarCell $w={44}>
                  <PlainButton aria-label="Forward">
                    <ThickArrow flip />
                  </PlainButton>
                </BarCell>
                <BarCell $w={37}>
                  <GraphIcon size={22} />
                </BarCell>
                <Crumbs>
                  <span>BP_ThirdPersonCharacter</span>
                  <Svg size={14} vb={14}>
                    <path d="M3.6 .6 L10 7 L3.6 13.4" stroke="#fff" strokeWidth="2" />
                  </Svg>
                  <span>Event Graph</span>
                </Crumbs>
                <ZoomLabel>Zoom -1</ZoomLabel>
              </GraphBar>
            </Graph>
            <TabStrip $top={6}>
              <DockTab icon={<LogIcon />} title="Compiler Results" open close />
            </TabStrip>
            <ResultsBody>
              <ResultList>
                <li>
                  [0828,18] Compile of BP_ThirdPersonCharacter successful! [in 234 ms]
                  (/Game/ThirdPerson/Blueprints/BP_ThirdPersonCharacter.BP_ThirdPersonCharacter)
                </li>
              </ResultList>
              <ResultActions>
                <PageSlot>
                  <ActionButton disabled>
                    PAGE
                    <Chevron color="#757575" />
                  </ActionButton>
                </PageSlot>
                <ActionButton>CLEAR</ActionButton>
              </ResultActions>
            </ResultsBody>
          </Column>

          <Column>
            <TabStrip>
              <DockTab icon={<PenLines size={16} />} title="Details" open close />
            </TabStrip>
            <PanelBar $h={38} $gap={10} $pad="0 0 1px 8px">
              <Search label="Search details" />
              <PlainButton aria-label="Property matrix">
                <TableIcon />
              </PlainButton>
              <PlainButton aria-label="Details options">
                <Gear size={16} />
              </PlainButton>
            </PanelBar>
            <DetailsBody>
              <DetailsHead>
                <Caret open />
                Graph Node
              </DetailsHead>
              <Prop id="comment-text" label="Comment Text">
                <TextField id="comment-text" type="text" $w={154} defaultValue="Modify the quantity of item" />
              </Prop>
              <DetailsHead>
                <Caret open />
                Comment
              </DetailsHead>
              <Prop id="comment-color" label="Comment Color" caret>
                <Swatch id="comment-color" type="button" />
              </Prop>
              <Prop id="font-size" label="Font Size">
                <TextField id="font-size" type="text" $w={124} defaultValue="18" />
              </Prop>
              <Prop id="show-bubble" label="Show Bubble When Zoomed" reset>
                <Check id="show-bubble" type="checkbox" />
              </Prop>
              <Prop id="color-bubble" label="Color Bubble" disabled>
                <Check id="color-bubble" type="checkbox" disabled />
              </Prop>
              <Prop id="move-mode" label="Move Mode">
                <SelectBox $w={124} $h={21} $size={11}>
                  <select id="move-mode">
                    <option>Group Movement</option>
                  </select>
                  <Chevron />
                </SelectBox>
              </Prop>
            </DetailsBody>
          </Column>
        </Workspace>

        <StatusBar>
          <StatusCell>
            <PlainButton>
              <FolderSearch size={16} />
              Content Drawer
            </PlainButton>
          </StatusCell>
          <StatusCell>
            <PlainButton>
              <LogIcon />
              Output Log
            </PlainButton>
          </StatusCell>
          <StatusCell $pad="0 8px 0 12px">
            <PlainButton>
              <CmdIcon />
              Cmd
            </PlainButton>
            <Chevron />
            <ConsoleInput type="text" placeholder="Enter Console Command" aria-label="Console command" />
          </StatusCell>
          <StatusRight>
            <StatusCell $pad="0 12px 0 10px">
              <PlainButton>
                <FloppyCheck />
                All Saved
              </PlainButton>
            </StatusCell>
            <StatusCell $pad="0 9px 0 12px">
              <PlainButton>
                <BranchIcon />
                Revision Control
                <Chevron />
              </PlainButton>
            </StatusCell>
          </StatusRight>
        </StatusBar>
      </Editor>
    </Page>
  );
}
